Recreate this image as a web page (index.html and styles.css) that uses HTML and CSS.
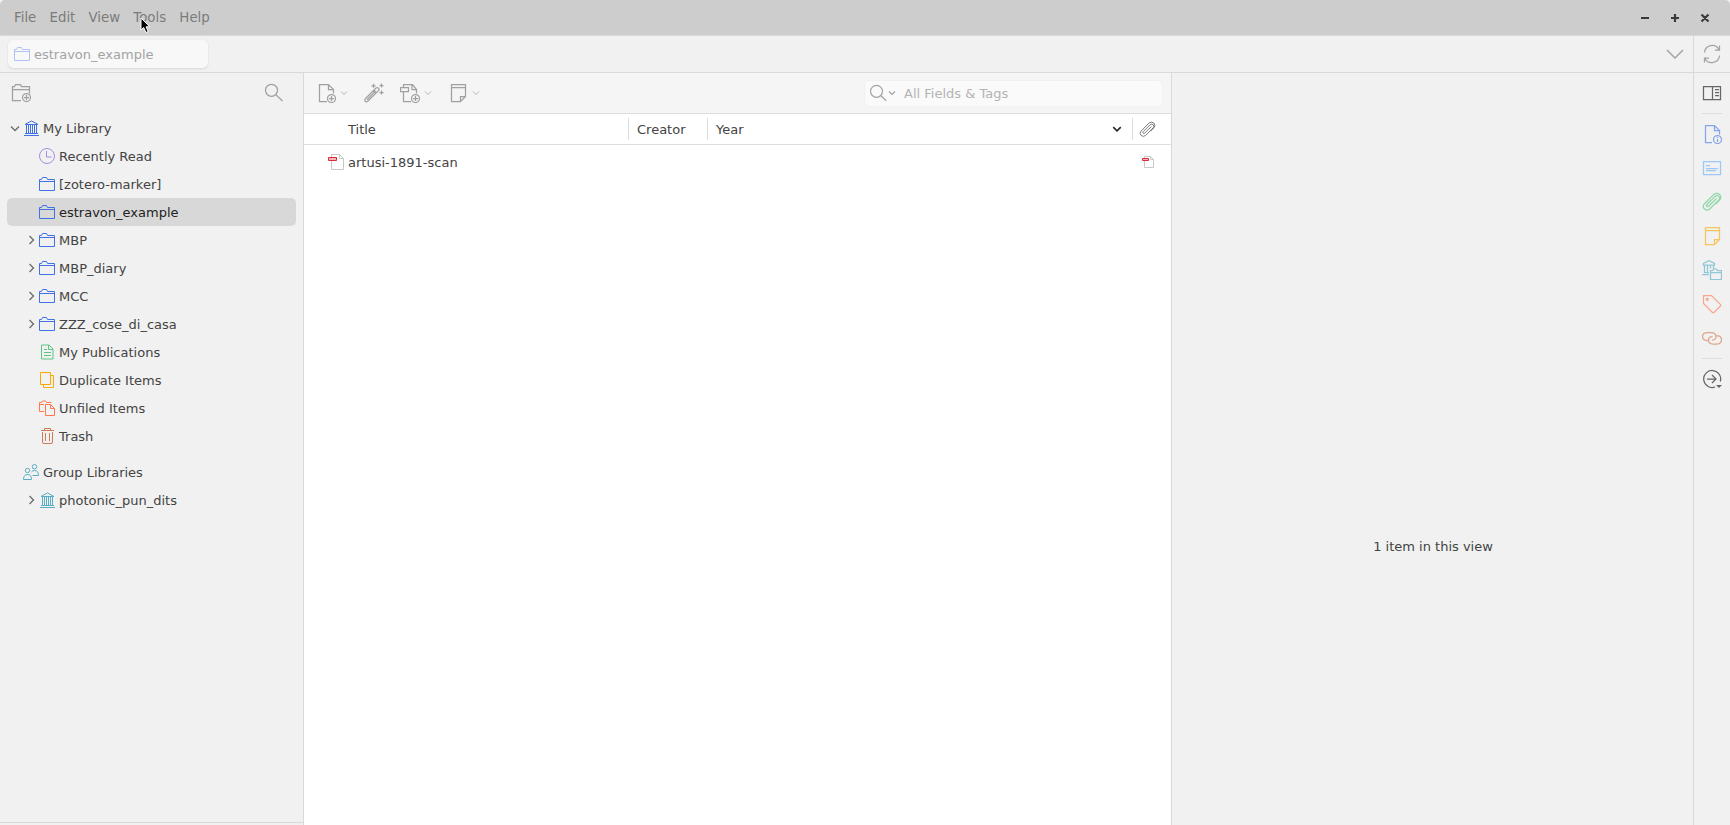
FILE: index.html
```
<!DOCTYPE html>
<html lang="en">
<head>
    <meta charset="UTF-8">
    <title>estravon_example - Zotero</title>
    <link rel="stylesheet" href="styles.css">
</head>
<body>
    <!-- icon definitions -->
    <svg class="defs">
        <symbol id="folder" viewBox="0 0 16 16"><path d="M.5 14.5v-11h2l1-2h4l1 2h7v11zM.5 5.5h15"/></symbol>
        <symbol id="library" viewBox="0 0 16 16"><path d="M1 15.500h15M2 13.500h13M3.500 5v8M5.500 5v8M7.500 5v8M9.500 5v8M11.500 5v8M13.500 5v8M2 4.500h13M2.500 4L8.500 1l6 3"/></symbol>
        <symbol id="clock" viewBox="0 0 16 16"><circle cx="8" cy="8" r="7.5"/><path d="M7.500 3v6h5"/></symbol>
        <symbol id="publications" viewBox="0 0 16 16"><path d="M2.500 1h7.500l4 4v10h-11.500zM9.500 1v4.500h4.500M5 5.500h3M5 8.500h7M5 11.500h7"/></symbol>
        <symbol id="duplicate" viewBox="0 0 16 16"><path d="M1.500.5h10v12h-10zM12 3.500h2.500v12h-10V13"/></symbol>
        <symbol id="unfiled" viewBox="0 0 16 16"><path d="M5 11.500H.5v-9h2l1-1.500h3l1 1.500h5M.5 4.500H5M6.500 4.500h5l4 4v7h-9zM11.500 4.500v4h4"/></symbol>
        <symbol id="trash" viewBox="0 0 16 16"><path d="M2 2.500h13M5.500 2.500v-2h6v2M3.500 4v10q0 1.500 1.500 1.500h7q1.500 0 1.500-1.500V4M6.500 5v8M10.500 5v8"/></symbol>
        <symbol id="group" viewBox="0 0 16 16"><circle cx="11.500" cy="2.700" r="2.200"/><circle cx="4.500" cy="6.500" r="2.200"/><path d="M.5 15.500q0-5 4-5t4 5zM8.500 8q1-1.500 3-1.500 4 0 4 5H9.500"/></symbol>
        <symbol id="twisty" viewBox="0 0 16 16"><path d="M6.500 4l4 4-4 4"/></symbol>
        <symbol id="chevron" viewBox="0 0 8 8"><path d="M1 2.500l3 3 3-3"/></symbol>
        <symbol id="search" viewBox="0 0 20 20"><circle cx="7.500" cy="7.300" r="6"/><path d="M11.800 11.600l6.700 6.400"/></symbol>
        <symbol id="quick-search" viewBox="0 0 18 18"><circle cx="7.500" cy="7.300" r="6"/><path d="M11.700 11.500l5.500 5.300"/></symbol>
        <symbol id="new-collection" viewBox="0 0 20 20"><path d="M10 17.500H1.500v-14h2l1-2h5l1 2h8v7M1.500 6.500h17"/><circle cx="15.500" cy="14.500" r="4"/><path d="M15.500 12v5M13 14.500h5"/></symbol>
        <symbol id="new-item" viewBox="0 0 20 20"><path d="M11 18.500H3.500v-17h9l5 5v4M12.500 1.500v5h5"/><circle cx="15.500" cy="15.500" r="4"/><path d="M15.500 13v5M13 15.500h5"/></symbol>
        <symbol id="wand" viewBox="0 0 20 20"><path d="M1.300 15.800L12 5.100q1.400-1 2.500 0t0 2.500L3.800 18.300q-1.500 1-2.500 0t0-2.500zM9.800 7.300l2.500 2.500M9.500.8v4M7.500 2.800h4M17.500.5v4M15.500 2.500h4M17.500 7.500v4M15.500 9.500h4"/><path d="M3 16.800l8.500-8.500"/></symbol>
        <symbol id="add-attachment" viewBox="0 0 20 20"><path d="M.5 4.500h8v4h-8zM3.500 4V1.500h9l4 5v4M3.500 9v9.500H11M12 1.500v5h4.500"/><circle cx="15.500" cy="15.500" r="4"/><path d="M15.500 13v5M13 15.500h5"/></symbol>
        <symbol id="note" viewBox="0 0 20 20"><path d="M3.500 1.500h14v12l-5 5h-9zM3.500 4.500h14M12.500 18.500v-5h5"/></symbol>
        <symbol id="pdf" viewBox="0 0 16 16"><path d="M3.500 3V.5h8l4 4v11h-12V7M11.500.5v4h4"/><path class="pdf-label" d="M.5 3.500h8v3h-8z"/></symbol>
        <symbol id="pdf-small" viewBox="0 0 12 12"><path d="M2.500 2V.5h6l3 3v8h-9V5M8.500.5v3h3"/><path class="pdf-label" d="M.5 2.500h6v2h-6z"/></symbol>
        <symbol id="clip" viewBox="0 0 20 20"><path d="M14.500 6.500l-7.800 7.800q-1 .8-1.800 0t0-1.800L13 4.400q2-1.500 3.700 0t0 3.700l-8.900 8.900q-2.700 2.200-5.300 0t0-5.300L11.800 2.400q3-2.200 5.700 0 2.500 2.800 0 5.700l-4 4"/></symbol>
        <symbol id="sync" viewBox="0 0 20 20"><path d="M2.500 8.500a7.700 7.700 0 0 1 14.500-3M17.500 1.500v4.500H13M17.500 11.500a7.700 7.700 0 0 1-14.500 3M2.500 18.500V14H7"/></symbol>
        <symbol id="sidebar" viewBox="0 0 20 20"><path d="M1.500 3.500h17v13h-17zM10.500 3.500v13M13 6.500h4M13 9.500h4M13 12.500h4"/></symbol>
        <symbol id="info" viewBox="0 0 20 20"><path d="M10 18.500H3.500v-17h9l5 5v4M12.500 1.500v5h5"/><circle cx="15.500" cy="15.500" r="4"/><path d="M15.500 15v3M15.500 13v1"/></symbol>
        <symbol id="abstract" viewBox="0 0 20 20"><path d="M1.500 3.500h17v13h-17zM4 7.500h4M4 10.500h12M4 12.500h10"/></symbol>
        <symbol id="collections" viewBox="0 0 20 20"><path d="M0 14.500h7M2 12.500h5M2.500 5.500v7M5.500 5.500v7M8.500 5.500v3M11.500 5.500v3M1.500 5V3.500L7 .8l5.500 2.700V5zM8.500 19.500v-9h2l1-1.500h3l1 1.500h4v9zM8.500 12.500h11"/></symbol>
        <symbol id="tag" viewBox="0 0 20 20"><path d="M1.500 1.500h8l9 9q.5 1 0 1.500l-6.500 6.500q-1 .5-1.500 0l-9-9z"/><path d="M4.500 4.500h1.500v1.500h-1.500z"/></symbol>
        <symbol id="related" viewBox="0 0 20 20"><path d="M6 12.500Q.5 12.500.5 8.500q0-4 5-4h3.500q5 0 5 4 0 3.500-4 3.500M14 7.500q5.500 0 5.500 4 0 4.500-5 4.500H11q-4.500 0-4.500-4 0-3.500 4-3.500"/></symbol>
        <symbol id="locate" viewBox="0 0 20 20"><path d="M18.300 12.500A8.500 8.500 0 1 0 13 18M5 10h9M10 6l4 4-4 4"/><path class="solid" d="M14 16h6l-3 3z"/></symbol>
    </svg>

    <div class="titlebar">
        <nav class="menu">
            <span>File</span>
            <span>Edit</span>
            <span>View</span>
            <span>Tools</span>
            <span>Help</span>
        </nav>
        <svg class="window-buttons" viewBox="0 0 70 10"><path d="M1 5h8M31 5h8M35 1v8M61.500 1.500l7 7M68.500 1.500l-7 7"/></svg>
    </div>

    <div class="tabbar">
        <div class="tab">
            <svg class="icon blue"><use href="#folder"/></svg>
            <span>estravon_example</span>
        </div>
        <svg class="tabs-menu" viewBox="0 0 18 10"><path d="M1 1l8 8 8-8"/></svg>
        <div class="sync"><svg class="icon-lg"><use href="#sync"/></svg></div>
    </div>

    <div class="main">
        <aside class="collections-pane">
            <div class="collections-toolbar">
                <svg class="icon-lg"><use href="#new-collection"/></svg>
                <svg class="icon-lg"><use href="#search"/></svg>
            </div>
            <div class="tree">
                <div class="row top"><svg class="icon twisty open"><use href="#twisty"/></svg><svg class="icon blue"><use href="#library"/></svg><span>My Library</span></div>
                <div class="row"><svg class="icon purple"><use href="#clock"/></svg><span>Recently Read</span></div>
                <div class="row"><svg class="icon blue"><use href="#folder"/></svg><span>[zotero-marker]</span></div>
                <div class="row selected"><svg class="icon blue"><use href="#folder"/></svg><span>estravon_example</span></div>
                <div class="row"><svg class="icon twisty"><use href="#twisty"/></svg><svg class="icon blue"><use href="#folder"/></svg><span>MBP</span></div>
                <div class="row"><svg class="icon twisty"><use href="#twisty"/></svg><svg class="icon blue"><use href="#folder"/></svg><span>MBP_diary</span></div>
                <div class="row"><svg class="icon twisty"><use href="#twisty"/></svg><svg class="icon blue"><use href="#folder"/></svg><span>MCC</span></div>
                <div class="row"><svg class="icon twisty"><use href="#twisty"/></svg><svg class="icon blue"><use href="#folder"/></svg><span>ZZZ_cose_di_casa</span></div>
                <div class="row"><svg class="icon green"><use href="#publications"/></svg><span>My Publications</span></div>
                <div class="row"><svg class="icon yellow"><use href="#duplicate"/></svg><span>Duplicate Items</span></div>
                <div class="row"><svg class="icon orange"><use href="#unfiled"/></svg><span>Unfiled Items</span></div>
                <div class="row"><svg class="icon brown"><use href="#trash"/></svg><span>Trash</span></div>
                <div class="row top group-header"><svg class="icon teal"><use href="#group"/></svg><span>Group Libraries</span></div>
                <div class="row"><svg class="icon twisty"><use href="#twisty"/></svg><svg class="icon teal"><use href="#library"/></svg><span>photonic_pun_dits</span></div>
            </div>
        </aside>

        <section class="items-pane">
            <div class="items-toolbar">
                <div class="tool"><svg class="icon-lg"><use href="#new-item"/></svg><svg class="chevron"><use href="#chevron"/></svg></div>
                <div class="tool"><svg class="icon-lg"><use href="#wand"/></svg></div>
                <div class="tool"><svg class="icon-lg"><use href="#add-attachment"/></svg><svg class="chevron"><use href="#chevron"/></svg></div>
                <div class="tool"><svg class="icon-lg"><use href="#note"/></svg><svg class="chevron"><use href="#chevron"/></svg></div>
                <div class="searchbox">
                    <svg class="icon-search"><use href="#quick-search"/></svg>
                    <svg class="chevron"><use href="#chevron"/></svg>
                    <span>All Fields &amp; Tags</span>
                </div>
            </div>
            <div class="columns header">
                <div class="col title">Title</div>
                <div class="col">Creator</div>
                <div class="col year">Year<svg class="chevron sort"><use href="#chevron"/></svg></div>
                <div class="col attach"><svg class="icon-clip"><use href="#clip"/></svg></div>
            </div>
            <div class="columns item">
                <div class="cell"><svg class="icon pdf"><use href="#pdf"/></svg><span>artusi-1891-scan</span></div>
                <svg class="pdf pdf-small"><use href="#pdf-small"/></svg>
            </div>
        </section>

        <section class="item-pane">1 item in this view</section>

        <aside class="rail">
            <svg class="icon-lg dark"><use href="#sidebar"/></svg>
            <hr>
            <svg class="icon-lg light-blue"><use href="#info"/></svg>
            <svg class="icon-lg sky"><use href="#abstract"/></svg>
            <svg class="icon-lg light-green"><use href="#clip"/></svg>
            <svg class="icon-lg light-yellow"><use href="#note"/></svg>
            <svg class="icon-lg light-teal"><use href="#collections"/></svg>
            <svg class="icon-lg light-red"><use href="#tag"/></svg>
            <svg class="icon-lg light-brown"><use href="#related"/></svg>
            <hr>
            <svg class="icon-lg dark"><use href="#locate"/></svg>
        </aside>
    </div>

    <svg class="cursor" viewBox="0 0 11 17"><path d="M1 1v12l2.700-2.500 2.300 5 2.200-1-2.200-4.700H9.700z"/></svg>
</body>
</html>
```
FILE: styles.css
```
* {
    box-sizing: border-box;
}

body {
    margin: 0;
    height: 825px;
    display: flex;
    flex-direction: column;
    overflow: hidden;
    font-family: "DejaVu Sans", sans-serif;
    font-size: 13px;
    color: #434343;
    background: #f1f1f1;
}

svg {
    flex: none;
    fill: none;
    stroke: currentColor;
}

.defs {
    position: absolute;
    width: 0;
    height: 0;
}

.icon {
    width: 16px;
    height: 16px;
}

.icon-lg {
    width: 20px;
    height: 20px;
    stroke-width: 1.250;
}

.chevron {
    width: 8px;
    height: 8px;
}

.blue { color: #4072e5; }
.purple { color: #a68de2; }
.green { color: #5bc681; }
.yellow { color: #faa700; }
.orange { color: #ff794c; }
.brown { color: #cc7a52; }
.teal { color: #59adc4; }

/* title bar */
.titlebar {
    flex: none;
    height: 36px;
    display: flex;
    align-items: center;
    justify-content: space-between;
    padding: 0 20px 0 14px;
    background: #cdcdcd;
    border-bottom: 1px solid #d9d9d9;
    border-radius: 5px 5px 0 0;
}

.menu {
    display: flex;
    gap: 13.200px;
    font-size: 13.330px;
    color: #7b7b7b;
}

.window-buttons {
    width: 70px;
    height: 10px;
    stroke: #3a3a3a;
    stroke-width: 2.200;
}

/* tabs */
.tabbar {
    flex: none;
    height: 37px;
    display: flex;
    align-items: center;
    padding-left: 8px;
    border-bottom: 1px solid #d9d9d9;
    color: #a3a3a3;
}

.tab {
    width: 200px;
    height: 28px;
    display: flex;
    align-items: center;
    gap: 4px;
    padding-left: 6px;
    border-radius: 5px;
    background: #f8f8f8;
    box-shadow: 0 0 1px rgba(0, 0, 0, 0.08), 0 1px 2px rgba(0, 0, 0, 0.1);
}

.tab .icon {
    opacity: 0.4;
}

.tabs-menu {
    width: 18px;
    height: 10px;
    margin-left: auto;
    margin-right: 9px;
    stroke-width: 1.500;
}

.sync {
    width: 37px;
    height: 36px;
    display: flex;
    align-items: center;
    justify-content: center;
    border-left: 1px solid #d9d9d9;
}

.main {
    flex: 1;
    display: flex;
    min-height: 0;
}

/* collections */
.collections-pane {
    width: 304px;
    display: flex;
    flex-direction: column;
    border-right: 1px solid #d9d9d9;
}

.collections-toolbar {
    height: 41px;
    display: flex;
    align-items: center;
    justify-content: space-between;
    padding: 0 19px 1px 11px;
    color: #a0a0a0;
}

.tree {
    height: 709px;
    padding: 0 7px;
    border-bottom: 1px solid #d9d9d9;
}

.row {
    height: 28px;
    display: flex;
    align-items: center;
    gap: 4px;
    padding-left: 32px;
    border-radius: 5px;
}

.row.top {
    padding-left: 16px;
}

.twisty {
    margin-left: -16px;
    margin-right: -4px;
    color: #6b6b6b;
    stroke-width: 1.300;
}

.twisty.open {
    transform: rotate(90deg);
}

.group-header {
    margin-top: 8px;
}

.selected {
    background: #d8d8d8;
    color: #222;
}

/* items */
.items-pane {
    width: 868px;
    background: #fff;
    border-right: 1px solid #d9d9d9;
}

.items-toolbar {
    height: 41px;
    display: flex;
    align-items: center;
    gap: 16px;
    padding: 0 8px 0 12px;
    background: #f5f5f5;
    border-bottom: 1px solid #dedede;
    color: #a0a0a0;
}

.tool {
    display: flex;
    align-items: center;
    gap: 4px;
}

.tool .chevron {
    color: #b5b5b5;
}

.searchbox {
    width: 299px;
    height: 27px;
    display: flex;
    align-items: center;
    margin-left: auto;
    padding-left: 4px;
    background: #fafafa;
    border: 1px solid #f1f1f1;
    border-radius: 5px;
    color: #b3b3b3;
}

.searchbox .chevron {
    margin: 0 8px 0 1px;
}

.searchbox svg {
    color: #a3a3a3;
    stroke-width: 1.200;
}

.icon-search {
    width: 18px;
    height: 18px;
}

.columns {
    display: flex;
    align-items: center;
}

.header {
    height: 31px;
    border-bottom: 1px solid #dedede;
}

.col {
    width: 79px;
    height: 22px;
    display: flex;
    align-items: center;
    padding-left: 8px;
    border-left: 1px solid #dedede;
}

.col.title {
    width: 324px;
    padding-left: 44px;
    border: none;
}

.col.year {
    width: 425px;
    justify-content: space-between;
    padding-right: 11px;
}

.col.attach {
    width: 39px;
    padding-left: 6px;
}

.chevron.sort {
    width: 10px;
    height: 10px;
    margin-right: -1px;
    color: #222;
    stroke-width: 1.200;
}

.icon-clip {
    width: 17px;
    height: 17px;
    color: #666;
}

.item {
    height: 28px;
    margin-top: 3px;
    justify-content: space-between;
    padding: 0 17px 0 24px;
}

.cell {
    display: flex;
    align-items: center;
    gap: 4px;
}

.pdf {
    color: #c9c9c9;
}

.pdf-label {
    stroke: #db2c3a;
    fill: #f3b4b8;
}

.pdf-small {
    width: 12px;
    height: 12px;
}

.item-pane {
    flex: 1;
    padding: 466px 0 0 1px;
    text-align: center;
}

/* side navigation */
.rail {
    width: 37px;
    display: flex;
    flex-direction: column;
    align-items: center;
    gap: 14px;
    padding-top: 10px;
    border-left: 1px solid #d9d9d9;
}

.rail hr {
    width: 20px;
    height: 1px;
    margin: -4px 0 -4px;
    border: none;
    background: #dedede;
}

.dark { color: #666; }
.light-blue { color: #86a5ea; }
.sky { color: #9bc8f8; }
.light-green { color: #8fd6a8; }
.light-yellow { color: #f8c55c; }
.light-teal { color: #92c7d8; }
.light-red { color: #f8a68e; }
.light-brown { color: #dfa78c; }

.solid {
    fill: currentColor;
    stroke: none;
}

.cursor {
    position: absolute;
    left: 140px;
    top: 17px;
    width: 11px;
    height: 17px;
    fill: #000;
    stroke: #fff;
}
```
